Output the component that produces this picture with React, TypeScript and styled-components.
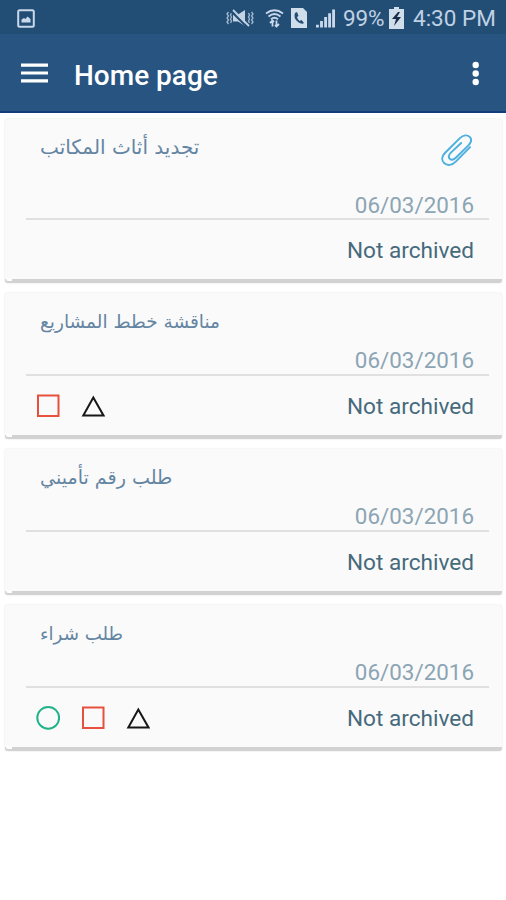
import React from "react";
import styled, { createGlobalStyle } from "styled-components";

const GlobalStyle = createGlobalStyle`
  body { margin: 0; background: #fff; font-family: Roboto, "DejaVu Sans", sans-serif; }
  * { box-sizing: border-box; }
  svg { display: block; flex: none; }
`;

const Screen = styled.main`
  width: 506px;
  height: 900px;
  overflow: hidden;
  background: #fff;
`;

const StatusBar = styled.div`
  height: 34px;
  padding: 2px 11px 0 17px;
  display: flex;
  align-items: center;
  background: #224e76;
  color: #c0d1e4;
  font-size: 22.5px;
  line-height: 32px;
  white-space: nowrap;
`;

const StatusIcons = styled.div`
  display: flex;
  align-items: center;
  margin-left: auto;
`;

const StatusGlyph = styled.svg<{ $gap?: number }>`
  margin-left: ${(p) => p.$gap ?? 0}px;
`;

const Battery = styled.span`
  margin: 0 0 0 8px;
  width: 41px;
  letter-spacing: -0.2px;
`;

const Clock = styled.span`
  margin: 0 0 0 9px;
  width: 82px;
`;

const Toolbar = styled.header`
  height: 79px;
  padding: 0 24px 0 21px;
  display: flex;
  align-items: center;
  background: #285482;
  border-bottom: 2px solid #123c7a;
  color: #fff;
`;

const Title = styled.h1`
  flex: 1;
  margin: 7px 0 0 26px;
  font-size: 28px;
  line-height: 34px;
  font-weight: 500;
`;

const IconButton = styled.button`
  padding: 0;
  border: 0;
  background: none;
  color: inherit;
`;

const List = styled.section`
  display: flex;
  flex-direction: column;
  gap: 10px;
  padding: 6px 4px 0 5px;
`;

const Card = styled.article<{ $tall?: boolean }>`
  position: relative;
  height: ${(p) => (p.$tall ? 164 : 146)}px;
  padding: 0 13px 0 21px;
  background: #fafafa;
  border-radius: 3px;
  border-bottom: 4px solid #d2d2d2;
  box-shadow: 0 0 2px #dedede;

  &::after {
    content: "";
    position: absolute;
    left: 1px;
    bottom: -2px;
    width: 6px;
    height: 3px;
    border-radius: 0 0 0 2px;
    background: #fdfdfd;
  }
`;

const CardTop = styled.div<{ $tall?: boolean }>`
  height: ${(p) => (p.$tall ? 101 : 83)}px;
  padding: ${(p) => (p.$tall ? "11px 15px 0 14px" : "12px 15px 1px 14px")};
  display: flex;
  flex-direction: column;
  justify-content: space-between;
  border-bottom: 2px solid #e0e0e0;
`;

const Heading = styled.div`
  display: flex;
  justify-content: space-between;
  height: 36px;
`;

const Subject = styled.h2<{ $size: number }>`
  margin: 0;
  color: #6485a2;
  font-family: "DejaVu Sans", sans-serif;
  font-size: ${(p) => p.$size}px;
  font-weight: 400;
  line-height: 34px;
`;

const Attachment = styled.svg`
  margin: 3px 2px 0 0;
`;

const DateText = styled.time`
  align-self: flex-end;
  margin-bottom: -1px;
  color: #8ca5b4;
  font-size: 22.4px;
  line-height: 27px;
`;

const CardBottom = styled.div`
  height: 59px;
  padding: 0 15px 0 10px;
  display: flex;
  align-items: center;
  justify-content: space-between;
`;

const Shapes = styled.div`
  display: flex;
  gap: 21px;
`;

const State = styled.span`
  margin-top: 3px;
  color: #466a7c;
  font-size: 22.6px;
  line-height: 28px;
`;

type Shape = "circle" | "square" | "triangle";

const ShapeIcon = ({ shape }: { shape: Shape }) => (
  <svg width="24" height="26" viewBox="0 0 24 26" fill="none" strokeWidth="2">
    {shape === "circle" && <circle cx="12.2" cy="12.8" r="10.9" stroke="#20b389" />}
    {shape === "square" && <rect x="2" y="2.5" width="20.5" height="20.5" stroke="#e6503c" />}
    {shape === "triangle" && <path d="M12.3 4.5 22.500 22.500H2.300Z" stroke="#171717" />}
  </svg>
);

const Paperclip = () => (
  <Attachment width="31" height="34" viewBox="0 0 32 34" fill="none" stroke="#4eb0df" strokeWidth="2" strokeLinecap="round" strokeLinejoin="round">
    <path d="M30 14 15.500 28.800C11.500 33 6.500 33.500 3.200 30.500C.3 27.500.8 23.500 3.800 20.400L19.500 4.700C23 1.400 27.200 1 29.600 3.500C32 6 31.200 9.300 28.300 12.200L15.300 25C12.800 27.400 10.500 27.500 9 26C7.400 24.300 8 21.900 10.200 19.700L20.800 9.800" />
  </Attachment>
);

interface Item {
  subject: string;
  size: number;
  tall?: boolean;
  shapes: Shape[];
}

const items: Item[] = [
  { subject: "تجديد أثاث المكاتب", size: 20, tall: true, shapes: [] },
  { subject: "مناقشة خطط المشاريع", size: 18.5, shapes: ["square", "triangle"] },
  { subject: "طلب رقم تأميني", size: 19.1, shapes: [] },
  { subject: "طلب شراء", size: 18.2, shapes: ["circle", "square", "triangle"] },
];

export default function App() {
  return (
    <Screen>
      <GlobalStyle />
      <StatusBar>
        <StatusGlyph width="18" height="19" viewBox="0 0 18 19">
          <rect x="1.2" y="1.2" width="15.6" height="16.6" rx="1.5" fill="none" stroke="#c9d8ea" strokeWidth="2" />
          <path d="M4.500 13.500V10.500l2.500-1.500 1.500 1 2-2.500 3 2.500v3.500Z" fill="#c9d8ea" />
        </StatusGlyph>
        <StatusIcons>
          <StatusGlyph width="28" height="18" viewBox="0 0 28 18" fill="none" stroke="#a3bad0" strokeWidth="1.3">
            <path d="M2.500 3 1 5l1.500 2L1 9l1.500 2L1 13l1.500 2M5.500 4 4.500 6l1 2-1 2 1 2-1 2M25.500 3 27 5l-1.500 2L27 9l-1.500 2 1.500 2-1.500 2M22.500 4l1 2-1 2 1 2-1 2 1 2" />
            <path d="M7 5.500h5l7-4.500v16l-7-4.500H7Z" fill="#c3d3e3" stroke="none" />
            <path d="M6 3 21 18" stroke="#224e76" strokeWidth="2.2" />
            <path d="M7 1 23 17" stroke="#c3d3e3" strokeWidth="1.8" />
          </StatusGlyph>
          <StatusGlyph $gap={11} width="19" height="19" viewBox="0 0 19 19" fill="none" stroke="#c9d8ea" strokeWidth="1.8">
            <path d="M1 4.500Q9.500-2 18 4.500M3.500 7.500Q9.500 2.500 15.500 7.500M6 10.200Q9.500 7.200 13 10.200" />
            <path d="M7.500 17.500v-6M5 14l2.500-2.500L9 13M11.500 11.500v6M14 15l-2.500 2.500L10 16" />
          </StatusGlyph>
          <StatusGlyph $gap={7} width="16" height="20" viewBox="0 0 16 20">
            <path d="M0 0h12l4 4v16H0Z" fill="#d0ddea" />
            <path d="M4 5q-2 5 3 9 4 3 6 1l-2.500-3-2 1q-2-1.500-2.500-4l1.500-1L6 4Z" fill="#224e76" />
          </StatusGlyph>
          <StatusGlyph $gap={9} width="19" height="19" viewBox="0 0 20 19" fill="#c9d8ea">
            <path d="M0 16h3v3H0ZM4.300 12h3v7h-3ZM8.600 8h3v11h-3ZM12.800 4h3v15h-3ZM17 0h3v19h-3Z" />
          </StatusGlyph>
          <Battery>99%</Battery>
          <StatusGlyph $gap={5} width="15" height="22" viewBox="0 0 15 22">
            <path d="M5 0h5v2h5v20H0V2h5Z" fill="#d0ddea" />
            <path d="M9 5 3 12h4l-2 7 7-9H8l3-5Z" fill="#172f48" />
          </StatusGlyph>
          <Clock>4:30 PM</Clock>
        </StatusIcons>
      </StatusBar>
      <Toolbar>
        <IconButton aria-label="Menu">
          <svg width="27" height="22" viewBox="0 0 27 22" stroke="currentColor" strokeWidth="3.2">
            <path d="M0 3.200h27M0 11h27M0 18.800h27" />
          </svg>
        </IconButton>
        <Title>Home page</Title>
        <IconButton aria-label="More options">
          <svg width="12" height="26" viewBox="0 0 12 26" fill="currentColor">
            <circle cx="5.7" cy="5" r="3.2" />
            <circle cx="5.7" cy="13.5" r="3.2" />
            <circle cx="5.7" cy="22" r="3.2" />
          </svg>
        </IconButton>
      </Toolbar>
      <List>
        {items.map((item) => (
          <Card key={item.subject} $tall={item.tall}>
            <CardTop $tall={item.tall}>
              <Heading>
                <Subject $size={item.size} dir="rtl" lang="ar">{item.subject}</Subject>
                {item.tall && <Paperclip />}
              </Heading>
              <DateText>06/03/2016</DateText>
            </CardTop>
            <CardBottom>
              <Shapes>{item.shapes.map((shape) => <ShapeIcon key={shape} shape={shape} />)}</Shapes>
              <State>Not archived</State>
            </CardBottom>
          </Card>
        ))}
      </List>
    </Screen>
  );
}
